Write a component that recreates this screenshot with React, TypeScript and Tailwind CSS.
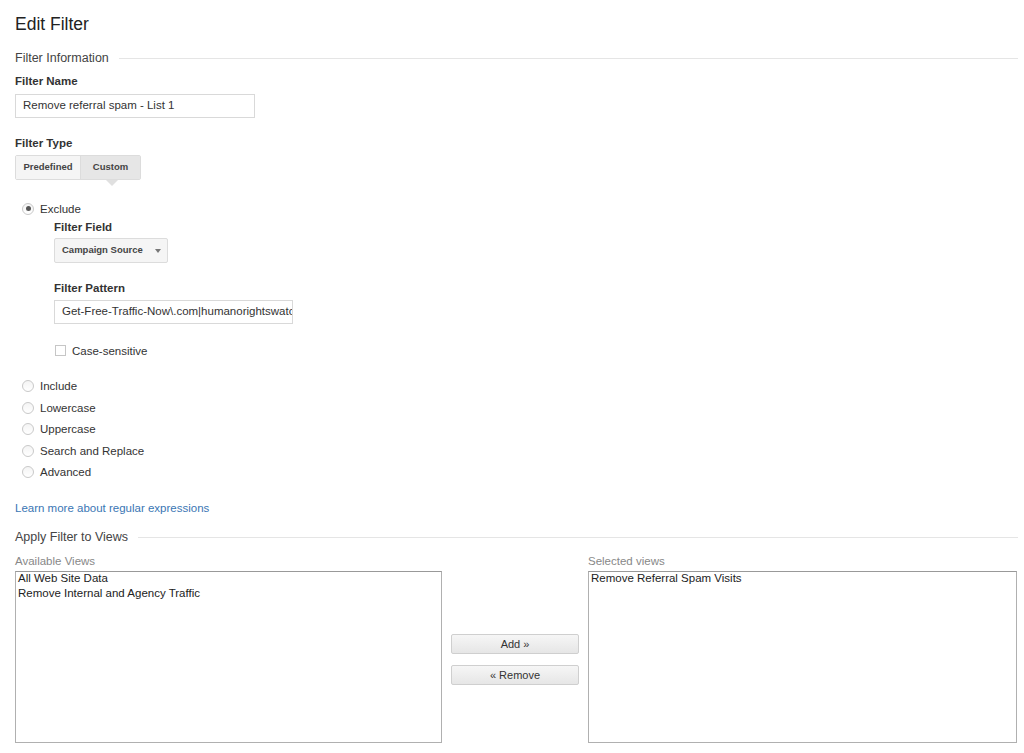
import React from "react";

const font = { fontFamily: '"Liberation Sans", Arial, sans-serif' };

function SectionHeader({ title }: { title: string }) {
  return (
    <div className="flex items-center h-[16px]">
      <span className="text-[12.5px] leading-[16px] text-[#444] pr-[10px] whitespace-nowrap">{title}</span>
      <div className="flex-1 h-px bg-[#e5e5e5]" />
    </div>
  );
}

function Label({ children }: { children: React.ReactNode }) {
  return <div className="text-[11.5px] leading-[14px] font-bold text-[#333] h-[14px]">{children}</div>;
}

function Radio({ label, checked = false }: { label: string; checked?: boolean }) {
  return (
    <div className="flex items-center h-[21.5px]">
      <span className="ml-[7px] w-[12px] h-[12px] rounded-full border border-[#c9c9c9] bg-gradient-to-b from-[#f4f4f4] to-white flex items-center justify-center">
        {checked && <span className="w-[5px] h-[5px] rounded-full bg-[#555]" />}
      </span>
      <span className="ml-[6px] text-[11.5px] leading-[14px] text-[#333]">{label}</span>
    </div>
  );
}

export default function App() {
  return (
    <div style={font} className="min-h-[753px] bg-white pl-[15px] pr-[6px] pt-[12px] text-[#333]">
      <h1 className="h-[24px] text-[17.5px] leading-[24px] text-[#222] font-normal">Edit Filter</h1>

      <div className="mt-[14px]">
        <SectionHeader title="Filter Information" />
      </div>

      <div className="mt-[8px]">
        <Label>Filter Name</Label>
      </div>
      <div className="mt-[6px] w-[240px] h-[24px] border border-[#d9d9d9] flex items-center px-[7px] text-[11.5px] text-[#333]">
        Remove referral spam - List 1
      </div>

      <div className="mt-[18px]">
        <Label>Filter Type</Label>
      </div>
      <div className="mt-[5px] flex">
        <div className="flex h-[25px] border border-[#dcdcdc] rounded-[2px] text-[9.5px] font-bold text-[#444]">
          <div className="w-[64px] flex items-center justify-center bg-[#f5f5f5]">Predefined</div>
          <div className="relative w-[60px] flex items-center justify-center bg-[#e6e6e6] border-l border-[#dcdcdc]">
            Custom
            <span className="absolute left-[25px] top-[24px] w-0 h-0 border-l-[6px] border-r-[6px] border-t-[6px] border-l-transparent border-r-transparent border-t-[#e0e0e0]" />
          </div>
        </div>
      </div>

      <div className="mt-[18px] -ml-[0px]">
        <Radio label="Exclude" checked />
      </div>
      <div className="pl-[39px]">
        <div className="mt-[0px]">
          <Label>Filter Field</Label>
        </div>
        <div className="mt-[4px] w-[114px] h-[25px] border border-[#dcdcdc] rounded-[2px] bg-[#f5f5f5] flex items-center pl-[7px] pr-[6px] justify-between">
          <span className="text-[9.5px] font-bold text-[#444]">Campaign Source</span>
          <span className="w-0 h-0 border-l-[3.5px] border-r-[3.5px] border-t-[4px] border-l-transparent border-r-transparent border-t-[#777] mt-[1px]" />
        </div>

        <div className="mt-[18px]">
          <Label>Filter Pattern</Label>
        </div>
        <div className="mt-[5px] w-[239px] h-[24px] border border-[#d9d9d9] flex items-center pl-[7px] text-[11.5px] text-[#333] overflow-hidden whitespace-nowrap">
          Get-Free-Traffic-Now\.com|humanorightswatch
        </div>

        <div className="mt-[20px] flex items-center h-[14px]">
          <span className="ml-[1px] w-[11px] h-[11px] border border-[#c6c6c6] bg-white" />
          <span className="ml-[6px] text-[11.5px] leading-[14px] text-[#333]">Case-sensitive</span>
        </div>
      </div>

      <div className="mt-[18px]">
        <Radio label="Include" />
        <Radio label="Lowercase" />
        <Radio label="Uppercase" />
        <Radio label="Search and Replace" />
        <Radio label="Advanced" />
      </div>

      <div className="mt-[18px] h-[14px] text-[11.5px] leading-[14px] text-[#3a76b4]">
        <a href="#">Learn more about regular expressions</a>
      </div>

      <div className="mt-[14px]">
        <SectionHeader title="Apply Filter to Views" />
      </div>

      <div className="mt-[9px] flex gap-[9px]">
        <div className="w-[427px]">
          <div className="h-[14px] text-[11.5px] leading-[14px] text-[#888]">Available Views</div>
          <div className="mt-[3px] h-[172px] border border-[#b0b0b0] border-t-[#999] pl-[2px] text-[11.5px] leading-[14.5px] text-[#222]">
            <div className="-mt-[1px]">All Web Site Data</div>
            <div>Remove Internal and Agency Traffic</div>
          </div>
        </div>

        <div className="w-[128px] pt-[80px] flex flex-col gap-[11px]">
          <button className="h-[20px] border border-[#cfcfcf] rounded-[2px] bg-gradient-to-b from-[#f6f6f6] to-[#e6e6e6] text-[11px] text-[#333]">
            Add »
          </button>
          <button className="h-[20px] border border-[#cfcfcf] rounded-[2px] bg-gradient-to-b from-[#f6f6f6] to-[#e6e6e6] text-[11px] text-[#333]">
            « Remove
          </button>
        </div>

        <div className="w-[429px]">
          <div className="h-[14px] text-[11.5px] leading-[14px] text-[#888]">Selected views</div>
          <div className="mt-[3px] h-[172px] border border-[#b0b0b0] border-t-[#999] pl-[2px] text-[11.5px] leading-[14.5px] text-[#222]">
            <div className="-mt-[1px]">Remove Referral Spam Visits</div>
          </div>
        </div>
      </div>
    </div>
  );
}
